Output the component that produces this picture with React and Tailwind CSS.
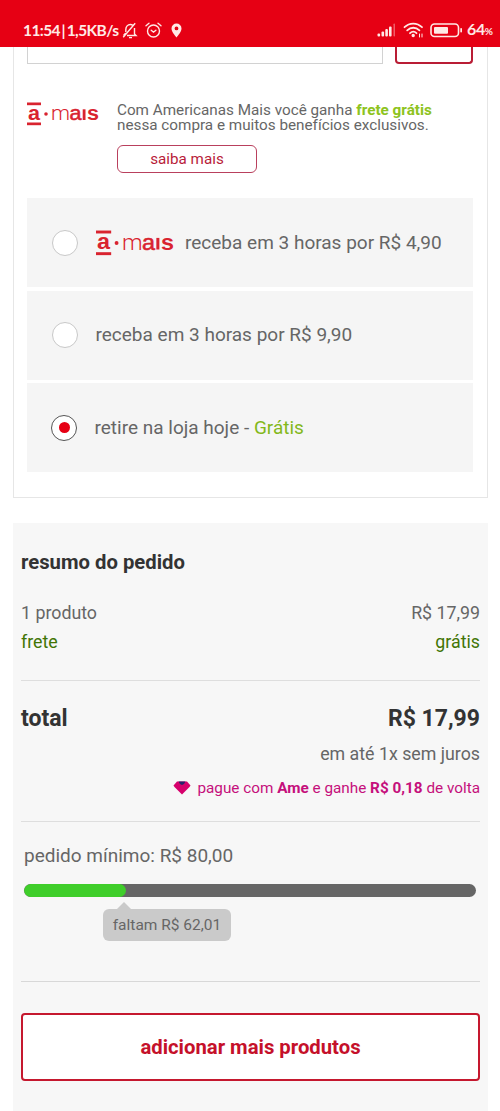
import React, { useState } from 'react';

const options = [
  { id: 'mais', label: 'receba em 3 horas por R$ 4,90', prime: true },
  { id: 'rapida', label: 'receba em 3 horas por R$ 9,90' },
  { id: 'retire', label: 'retire na loja hoje - ', highlight: 'Grátis' },
];

const MaisLogo = ({ className }) => (
  <svg viewBox="0 0 72 24" className={className} fill="#d9232f" fontFamily="'Liberation Sans', Arial, sans-serif">
    <rect x="0" y="0.5" width="14" height="2.7" />
    <rect x="0" y="20.5" width="14" height="2.7" />
    <text x="1" y="17.5" fontSize="20" fontWeight="700" textLength="12" lengthAdjust="spacingAndGlyphs">a</text>
    <circle cx="19" cy="12" r="1.8" />
    <text x="24" y="18" fontSize="21" fontFamily="Roboto, sans-serif" fontWeight="300" textLength="19" lengthAdjust="spacingAndGlyphs">m</text>
    <text x="42.5" y="18" fontSize="20" textLength="12" lengthAdjust="spacingAndGlyphs" stroke="#d9232f" strokeWidth="0.5">a</text>
    <rect x="55.7" y="7.3" width="2.8" height="10.7" />
    <text x="60" y="18" fontSize="20" fontWeight="700" textLength="12" lengthAdjust="spacingAndGlyphs">s</text>
  </svg>
);

const StatusBar = () => (
  <header className="flex h-[47px] shrink-0 items-center justify-between bg-[#e60014] pt-[13px] pr-[7px] pl-[23px] text-[#ffe9e6]">
    <div className="flex items-center">
      <span className="w-[99px] whitespace-nowrap font-[Lato] text-[15.500px] leading-5 font-bold tracking-[-0.6px] [word-spacing:-1.5px]">11:54 | 1,5KB/s</span>
      {/* muted bell */}
      <svg className="h-[17px] w-[16px]" viewBox="0 0 16 17" fill="none" stroke="currentColor" strokeWidth="1.4">
        <path d="M3.800 10V7.500C3.800 4.500 5.800 2.500 8.300 2.500c1 0 2 .4 2.700 1M12.500 6v6l1.500 1.500H5M7 15.600h3M1.200 15.200 13.200 1.200M1.500 13.500 3.800 11" />
      </svg>
      {/* alarm clock */}
      <svg className="ml-[7px] h-[17px] w-[17px]" viewBox="0 0 17 17" fill="none" stroke="currentColor" strokeWidth="1.4" strokeLinecap="round">
        <circle cx="8.5" cy="9" r="6" />
        <path d="M1 3.8 4 1.3M16 3.8l-3-2.5M6.2 8.2l2.3 2 2.4-2" />
      </svg>
      <svg className="ml-[9px] h-[15px] w-[11px]" viewBox="0 0 11 15" fill="currentColor" fillRule="evenodd">
        <path d="M5.5.5a5 5 0 0 0-5 5c0 3.500 5 9 5 9s5-5.500 5-9a5 5 0 0 0-5-5Zm0 3a1.900 1.900 0 1 1 0 3.800 1.900 1.900 0 0 1 0-3.800Z" />
      </svg>
    </div>
    <div className="flex items-center">
      {/* signal */}
      <svg className="h-[14px] w-[19px]" viewBox="0 0 19 14" fill="currentColor">
        <rect x="0.500" y="10.500" width="2.600" height="3" rx="1" />
        <rect x="4.500" y="8.500" width="2.600" height="5" rx="1" />
        <rect x="8.300" y="6" width="2.600" height="7.500" rx="1" />
        <rect x="12" y="3.500" width="2.600" height="10" rx="1" />
        <rect x="16.500" y="0.500" width="1.500" height="13" rx="0.700" opacity="0.4" />
      </svg>
      {/* wifi */}
      <svg className="ml-[7px] h-[16px] w-[21px]" viewBox="0 0 21 16" fill="none" stroke="currentColor" strokeWidth="1.800" strokeLinecap="round">
        <path d="M1.500 5.200c5-4.800 12.500-4.800 17.500 0M4.200 8.300c3.600-3.400 8.600-3.400 12.200 0M7 11.200c2-1.900 4.600-1.900 6.500 0" />
        <circle cx="10.200" cy="13.500" r="0.800" fill="currentColor" />
        <path d="M16.500 12v3M19 12v3" strokeWidth="1" />
      </svg>
      {/* battery */}
      <svg className="ml-[6px] h-[15px] w-[33px]" viewBox="0 0 33 15" fill="none">
        <rect x="1" y="1" width="27.500" height="12.500" rx="3.500" stroke="currentColor" strokeWidth="1.600" />
        <rect x="4" y="4" width="14" height="6.700" rx="1" fill="currentColor" />
        <rect x="30.300" y="5" width="1.700" height="4.500" rx="0.800" fill="currentColor" />
      </svg>
      <span className="ml-[4px] flex w-[26px] items-baseline whitespace-nowrap font-[Lato] text-[16px] leading-5 font-bold tracking-[-0.4px]">
        64<span className="text-[10px]">%</span>
      </span>
    </div>
  </header>
);

const Option = ({ option, checked, onSelect }) => (
  <button
    type="button"
    onClick={() => onSelect(option.id)}
    className={`flex h-[89px] w-full items-center bg-[#f5f5f5] text-left ${checked ? 'pl-[24px]' : 'pl-[25px]'}`}
  >
    <span className={`flex size-[26px] shrink-0 items-center justify-center rounded-full border bg-white ${checked ? 'border-[#555]' : 'border-[#c8c8c8]'}`}>
      {checked && <span className="size-[11px] rounded-full bg-[#e60014]" />}
    </span>
    {option.prime && <MaisLogo className="ml-[18px] h-[26px] w-[78px]" />}
    <span className={`whitespace-pre text-[19px] leading-6 ${option.prime ? 'ml-[11px]' : 'ml-[17.500px]'}`}>
      {option.label}
      {option.highlight && <span className="text-[#83b81a]">{option.highlight}</span>}
    </span>
  </button>
);

const Delivery = () => {
  const [selected, setSelected] = useState('retire');

  return (
    <section className="mr-[12px] ml-[13px] h-[451px] shrink-0 border-x border-b border-[#e6e6e6] pr-[14px] pl-[13px]">
      <div className="flex h-[17px] justify-between">
        <div className="w-[356px] border-x border-b border-[#d2d2d2]" />
        <div className="w-[78px] rounded-b-[4px] border-x-2 border-b-2 border-[#b91d35]" />
      </div>

      <div className="mt-[38px] flex">
        <MaisLogo className="h-[24px] w-[72px]" />
        <div className="ml-[18px]">
          <p className="pt-[1px] whitespace-nowrap text-[15.250px] leading-[15px]">
            Com Americanas Mais você ganha <strong className="font-bold text-[#8dc320]">frete grátis</strong>
            <br />
            nessa compra e muitos benefícios exclusivos.
          </p>
          <button type="button" className="mt-[12px] flex h-[28px] w-[140px] items-center justify-center rounded-[6px] border border-[#b9405d] text-[15.200px] text-[#b81c3a]">
            saiba mais
          </button>
        </div>
      </div>

      <div className="mt-[25px] flex flex-col gap-[3.500px]">
        {options.map((option) => (
          <Option key={option.id} option={option} checked={selected === option.id} onSelect={setSelected} />
        ))}
      </div>
    </section>
  );
};

const Gem = () => (
  <svg className="mr-[6px] h-[14px] w-[18px]" viewBox="0 0 18 14">
    <path d="M4 .5h10L17.500 4.500 16.500 6 9 13.500 1.500 6 .5 4.500Z" fill="#d6006c" />
    <path d="M5.500 .5h7L11 3 9 4 7 3Z" fill="#28236b" />
  </svg>
);

const Summary = () => {
  const total = 17.99;
  const minimum = 80;
  const progress = (total / minimum) * 100;

  return (
    <section className="mt-[25px] mr-[12px] ml-[13px] h-[588px] shrink-0 bg-[#f7f7f7] px-[8px] pt-[26px]">
      <h2 className="text-[20.300px] leading-[26px] font-bold text-[#333]">resumo do pedido</h2>

      <div className="mt-[24px] flex justify-between text-[17.800px] leading-[28px]">
        <span>1 produto</span>
        <span>R$ 17,99</span>
      </div>
      <div className="flex justify-between text-[17.800px] leading-[29px] text-[#417505]">
        <span>frete</span>
        <span>grátis</span>
      </div>

      <div className="mt-[24px] border-t border-[#dedede] pt-[23px]">
        <div className="flex justify-between text-[23px] leading-[30px] font-bold text-[#333]">
          <span>total</span>
          <span>R$ 17,99</span>
        </div>
        <p className="mt-[7px] text-right text-[17.800px] leading-[26px]">em até 1x sem juros</p>
        <p className="mt-[10px] flex items-center justify-end whitespace-pre text-[15.300px] leading-[22px] text-[#c5107c]">
          <Gem />
          <span>pague com <b>Ame</b> e ganhe <b>R$ 0,18</b> de volta</span>
        </p>
      </div>

      <div className="mt-[22px] h-[160px] border-t border-[#dedede] pr-[4px] pl-[3px] pt-[21px]">
        <p className="text-[19px] leading-[26px]">pedido mínimo: R$ 80,00</p>
        <div className="mt-[15px] h-[13px] overflow-hidden rounded-full bg-[#666]">
          <div className="h-full rounded-full bg-[#3fce2a]" style={{ width: `${progress}%` }} />
        </div>
        <div className="mt-[5px] ml-[79px] w-[128px]">
          <div className="ml-[14px] size-0 border-x-[7px] border-b-[7px] border-x-transparent border-b-[#cacaca]" />
          <div className="h-[32px] rounded-[6px] bg-[#cacaca] text-center text-[15.500px] leading-[32px]">faltam R$ 62,01</div>
        </div>
      </div>

      <div className="border-t border-[#d8d8d8] pt-[31px]">
        <button type="button" className="h-[68px] w-full rounded-[4px] border-2 border-[#c5182e] bg-white text-[20.300px] font-bold text-[#c5102a]">
          adicionar mais produtos
        </button>
      </div>
    </section>
  );
};

const App = () => (
  <div className="flex h-[1111px] w-[500px] flex-col overflow-hidden bg-white font-[Roboto,sans-serif] text-[#666]">
    <StatusBar />
    <Delivery />
    <Summary />
  </div>
);

export default App;
